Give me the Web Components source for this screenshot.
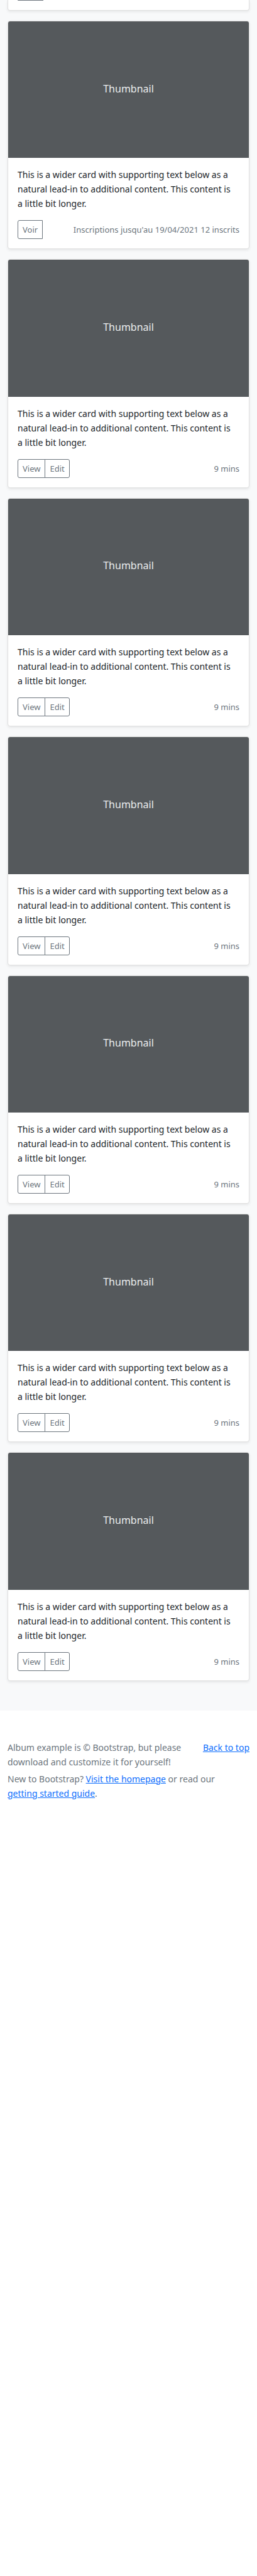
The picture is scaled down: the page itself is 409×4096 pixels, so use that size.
<!DOCTYPE html>
<html lang="en">
<head>
<meta charset="utf-8">
<meta name="viewport" content="width=device-width, initial-scale=1">
<title>Album example</title>
<style>
  html, body { margin: 0; }
  body {
    background: #fff;
    color: #212529;
    font: 14px/23px "Noto Sans", "Liberation Sans", sans-serif;
  }
</style>
</head>
<body>
<album-section>
  <card-tail></card-tail>
  <album-card>
    <card-button slot="actions" edge="start">Voir</card-button>
    <span slot="meta">Inscriptions jusqu'au 19/04/2021 12 inscrits</span>
  </album-card>
  <album-card></album-card>
  <album-card></album-card>
  <album-card></album-card>
  <album-card></album-card>
  <album-card></album-card>
  <album-card></album-card>
</album-section>
<album-footer></album-footer>

<template id="section-template">
  <style>
    :host { display: block; background: #f8f9fa; padding: 0 12px 47px; }
    .grid { display: grid; gap: 16px; }
  </style>
  <div class="grid"><slot></slot></div>
</template>

<template id="tail-template">
  <style>
    :host {
      display: block;
      padding: 0 15px 15px;
      background: #fff;
      border: solid #dfdfdf;
      border-width: 0 1px 1px;
      border-radius: 0 0 4px 4px;
      box-shadow: 0 2px 4px rgba(0, 0, 0, .075);
    }
    button {
      display: block;
      width: 41px;
      height: 1px;
      padding: 0;
      border: 0;
      border-radius: 0 0 0 1px;
      background: #6c757d;
    }
  </style>
  <button type="button" aria-label="Voir"></button>
</template>

<template id="button-template">
  <style>
    :host { display: block; }
    :host(:not([edge="start"])) { margin-left: -1px; }
    button {
      display: block;
      height: 30px;
      padding: 0 7px;
      border: 1px solid #6c757d;
      border-radius: 0 3px 3px 0;
      background: transparent;
      color: #6c757d;
      font: inherit;
      font-size: 13px;
      line-height: 20px;
      cursor: pointer;
    }
    :host([edge="start"]) button { border-radius: 3px 0 0 3px; }
    button:hover { background: #6c757d; color: #fff; }
  </style>
  <button type="button"><slot></slot></button>
</template>

<template id="card-template">
  <style>
    :host {
      display: block;
      background: #fff;
      border: 1px solid #dfdfdf;
      border-radius: 4px;
      box-shadow: 0 2px 4px rgba(0, 0, 0, .075);
    }
    .thumb {
      display: flex;
      align-items: center;
      justify-content: center;
      box-sizing: border-box;
      aspect-ratio: 37 / 21;
      padding-bottom: 3px;
      border-radius: 3px 3px 0 0;
      background: #55595c;
      color: #eceeef;
      font-size: 16px;
    }
    .body { padding: 15px; }
    p { margin: 0 0 15px; }
    .keep { white-space: nowrap; }
    .row { display: flex; align-items: center; justify-content: space-between; }
    .group { display: flex; }
    small { color: #6c757d; font-size: 13px; line-height: 20px; white-space: nowrap; }
  </style>
  <div class="thumb">Thumbnail</div>
  <div class="body">
    <p>This is a wider card with supporting text below as a natural lead-in to additional content. This content is <span class="keep">a little bit longer.</span></p>
    <div class="row">
      <div class="group">
        <slot name="actions"><card-button edge="start">View</card-button><card-button>Edit</card-button></slot>
      </div>
      <small><slot name="meta">9 mins</slot></small>
    </div>
  </div>
</template>

<template id="footer-template">
  <style>
    :host { display: block; padding: 47px 12px; color: #6c757d; }
    .top { display: flex; justify-content: space-between; align-items: flex-start; gap: 16px; }
    p { margin: 0 0 4px; }
    a { color: #0d6efd; text-decoration: underline; white-space: nowrap; }
    .back { flex: none; }
  </style>
  <footer>
    <div class="top">
      <p>Album example is © Bootstrap, but please download and customize it for yourself!</p>
      <a class="back" href="#">Back to top</a>
    </div>
    <p>New to Bootstrap? <a href="#home">Visit the homepage</a> or read our <a href="#guide">getting started guide</a>.</p>
  </footer>
</template>

<script>
  function define(name, templateId) {
    customElements.define(name, class extends HTMLElement {
      constructor() {
        super();
        const template = document.getElementById(templateId);
        this.attachShadow({ mode: "open" }).append(template.content.cloneNode(true));
      }
    });
  }
  define("card-button", "button-template");
  define("card-tail", "tail-template");
  define("album-card", "card-template");
  define("album-section", "section-template");
  define("album-footer", "footer-template");
</script>
</body>
</html>
